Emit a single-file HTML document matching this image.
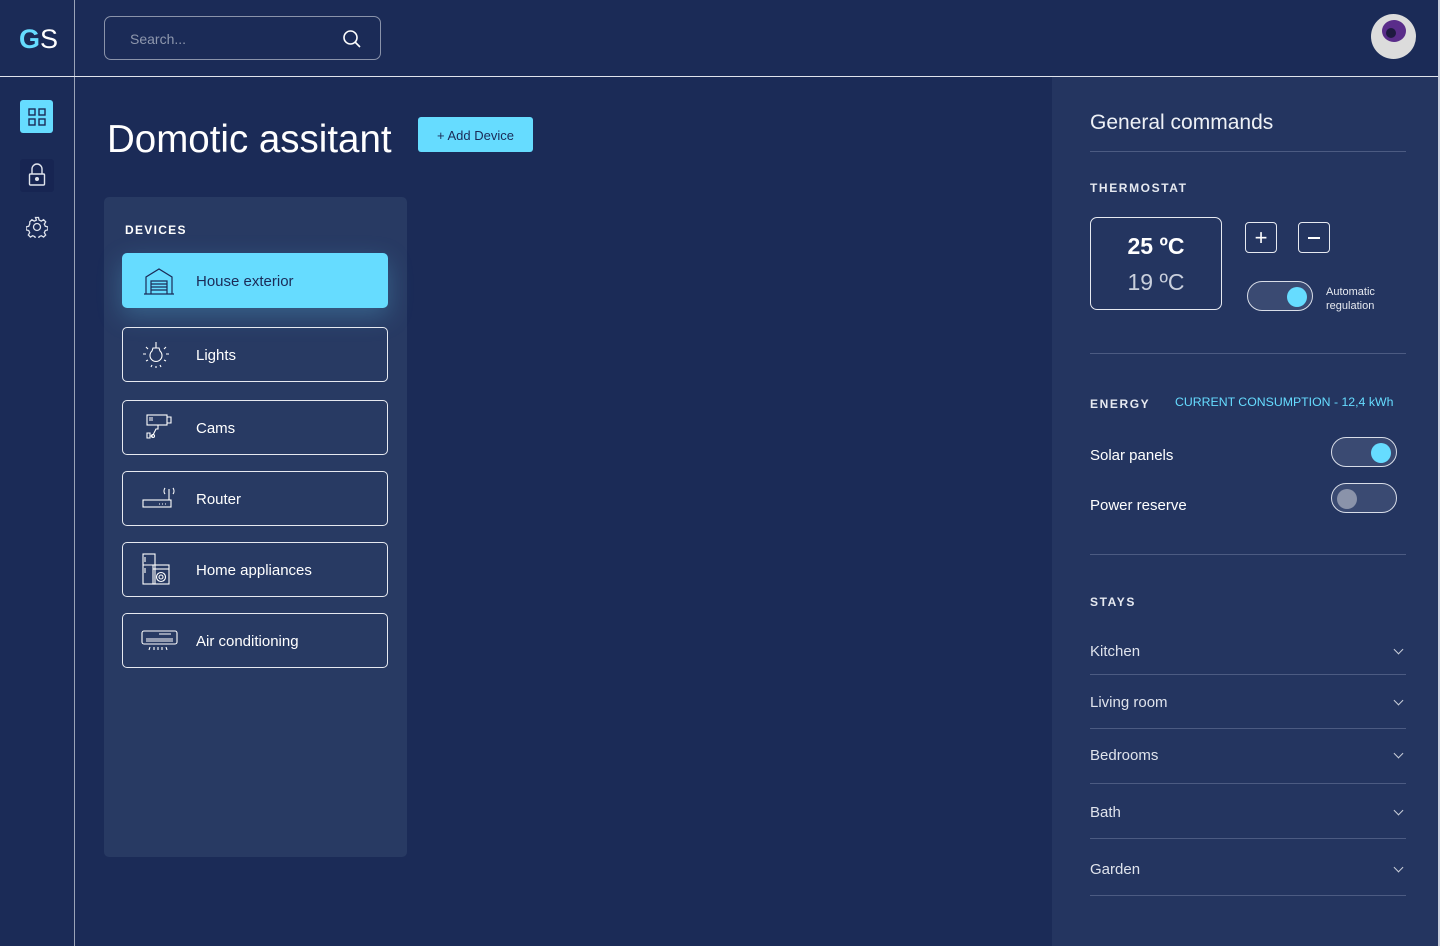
<!DOCTYPE html>
<html><head><meta charset="utf-8"><style>
*{box-sizing:border-box;margin:0;padding:0}
body{width:1440px;height:946px;background:#1b2b57;font-family:"Liberation Sans",sans-serif;color:#fff;position:relative;overflow:hidden}
.a{position:absolute}
.dev{position:absolute;left:122px;width:266px;height:55px;border:1px solid #e6e9f0;border-radius:5px;font-size:15px;display:flex;align-items:center}
.dev span{position:absolute;left:73px;top:19px}
.dev svg{position:absolute;left:18px}
.tg{position:absolute;width:66px;height:30px;border:1.5px solid #d8dde8;border-radius:15px;background:#3a4a72}
.tg i{position:absolute;top:5px;width:20px;height:20px;border-radius:50%}
.stay{position:absolute;left:1090px;width:316px;font-size:15px;color:#dfe3ec}
.stay:after{content:"";position:absolute;right:4px;top:3px;width:6px;height:6px;border-right:1.5px solid #c8cdd8;border-bottom:1.5px solid #c8cdd8;transform:rotate(45deg)}
.hr{position:absolute;left:1090px;width:316px;height:1px;background:#4c5b82}
</style></head><body>
<div class="a" style="left:74px;top:0;width:1px;height:946px;background:#9aa3b8"></div>
<div class="a" style="left:0;top:76px;width:1440px;height:1px;background:#e0e4ec"></div>
<div class="a" style="left:1052px;top:77px;width:386px;height:869px;background:#243560"></div>
<div class="a" style="left:1438px;top:0;width:2px;height:946px;background:#c9cfdc"></div>
<div class="a" style="left:19px;top:24px;font-size:27px;font-weight:bold"><span style="color:#66dcff">G</span><span style="font-weight:normal">S</span></div>
<div class="a" style="left:104px;top:16px;width:277px;height:44px;border:1px solid #8a93aa;border-radius:7px"></div>
<div class="a" style="left:130px;top:31px;font-size:14px;color:#8e97ad">Search...</div>
<svg class="a" style="left:342px;top:29px" width="20" height="20"><circle cx="8.5" cy="8.5" r="6.5" fill="none" stroke="#fff" stroke-width="1.6"/><path d="M13 13l5 5" stroke="#fff" stroke-width="1.6"/></svg>
<div class="a" style="left:1371px;top:14px;width:45px;height:45px;border-radius:50%;background:#dcdcdc"></div>
<div class="a" style="left:1382px;top:20px;width:24px;height:22px;border-radius:50%;background:#5a2d8a"></div>
<div class="a" style="left:1386px;top:28px;width:10px;height:10px;border-radius:50%;background:#1e1a40"></div>
<div class="a" style="left:20px;top:100px;width:33px;height:33px;border-radius:3px;background:#66dcff"></div>
<svg class="a" style="left:28px;top:108px" width="18" height="18" fill="none" stroke="#1b2b57" stroke-width="1.4"><rect x="1" y="1" width="6" height="6"/><rect x="11" y="1" width="6" height="6"/><rect x="1" y="11" width="6" height="6"/><rect x="11" y="11" width="6" height="6"/></svg>
<div class="a" style="left:20px;top:159px;width:34px;height:33px;border-radius:3px;background:#172552"></div>
<svg class="a" style="left:28px;top:163px" width="18" height="24" fill="none" stroke="#dfe3ec" stroke-width="1.4"><path d="M4 11V6a5 5 0 0 1 10 0v5"/><rect x="1.5" y="11" width="15" height="11" rx="1"/><circle cx="9" cy="16" r="1.3" fill="#dfe3ec"/></svg>
<svg class="a" style="left:26px;top:216px" width="22" height="22" fill="none" stroke="#dfe3ec" stroke-width="1.3"><circle cx="11" cy="11" r="3.5"/><path d="M9.5 1.5h3l.6 2.6 2.2 1 2.3-1.4 2.1 2.1-1.4 2.3 1 2.2 2.6.6v3l-2.6.6-1 2.2 1.4 2.3-2.1 2.1-2.3-1.4-2.2 1-.6 2.6h-3l-.6-2.6-2.2-1-2.3 1.4-2.1-2.1 1.4-2.3-1-2.2-2.6-.6v-3l2.6-.6 1-2.2L3.8 5.8l2.1-2.1 2.3 1.4 2.2-1z"/></svg>
<div class="a" style="left:107px;top:118px;font-size:38.5px">Domotic assitant</div>
<div class="a" style="left:418px;top:117px;width:115px;height:35px;border-radius:3px;background:#66dcff;color:#1b2b57;font-size:13px;text-align:center;line-height:37px">+ Add Device</div>
<div class="a" style="left:104px;top:197px;width:303px;height:660px;border-radius:5px;background:#283a63"></div>
<div class="a" style="left:125px;top:223px;font-size:12px;font-weight:bold;letter-spacing:1.3px">DEVICES</div>
<div class="dev" style="top:253px;background:#66dcff;border-color:#66dcff;color:#1b2b57;box-shadow:0 8px 25px rgba(102,220,255,.25)"><svg width="32" height="28" fill="none" stroke="#1b2b57" stroke-width="1.2" style="left:20px"><path d="M1 27h30M3 27V10L16 2l13 8v17M8 27V14h16v13M8 17h16M8 20h16M8 23h16"/></svg><span>House exterior</span></div>
<div class="dev" style="top:327px"><svg width="30" height="30" fill="none" stroke="#fff" stroke-width="1.1"><path d="M15 2v6M12 8h6l1 3a6 6 0 1 1-8 0z M2 14h3M25 14h3M5 7l2 2M25 7l-2 2M5 21l2-1M25 21l-2-1M10 27l1-2M20 27l-1-2M15 28v-2"/></svg><span>Lights</span></div>
<div class="dev" style="top:400px"><svg width="32" height="30" fill="none" stroke="#fff" stroke-width="1.1"><rect x="6" y="2" width="20" height="10"/><path d="M26 4h4v6h-4M17 12v4h-2l-3 6M6 20h3v5H6zM9 23h3"/><circle cx="12" cy="23" r="1.5"/><path d="M8 5h4M8 7h4"/></svg><span>Cams</span></div>
<div class="dev" style="top:471px"><svg width="34" height="30" fill="none" stroke="#fff" stroke-width="1.1"><rect x="2" y="16" width="28" height="7"/><path d="M28 16V5M24 4a5 5 0 0 0 0 6M32 4a5 5 0 0 1 0 6M18 20h1M21 20h1M24 20h1"/></svg><span>Router</span></div>
<div class="dev" style="top:542px"><svg width="32" height="34" fill="none" stroke="#fff" stroke-width="1.1" style="top:10px"><rect x="2" y="1" width="12" height="30"/><path d="M2 12h12M4 4v5M4 15v5"/><rect x="12" y="12" width="16" height="19"/><path d="M12 16h16"/><circle cx="20" cy="24" r="4.5"/><circle cx="20" cy="24" r="2"/></svg><span>Home appliances</span></div>
<div class="dev" style="top:613px"><svg width="38" height="26" fill="none" stroke="#fff" stroke-width="1.1"><rect x="1" y="3" width="35" height="13" rx="2"/><path d="M5 13h27M5 11h27M18 6h12M9 19l-1 3M13 19v3M17 19v3M21 19v3M25 19l1 3"/></svg><span>Air conditioning</span></div>
<div class="a" style="left:1090px;top:111px;font-size:21px;color:#eef1f6">General commands</div>
<div class="hr" style="top:151px"></div>
<div class="a" style="left:1090px;top:181px;font-size:12px;font-weight:bold;letter-spacing:1.6px;color:#e6e9f0">THERMOSTAT</div>
<div class="a" style="left:1090px;top:217px;width:132px;height:93px;border:1.5px solid #e6e9f0;border-radius:7px;text-align:center">
<div style="margin-top:15px;font-size:23px;font-weight:bold">25 ºC</div><div style="margin-top:9px;font-size:23px;color:#c9cfdc">19 ºC</div></div>
<div class="a" style="left:1245px;top:222px;width:32px;height:31px;border:1.5px solid #e6e9f0;border-radius:4px;text-align:center;font-size:22px;line-height:30px">+</div>
<div class="a" style="left:1298px;top:222px;width:32px;height:31px;border:1.5px solid #e6e9f0;border-radius:4px"><div style="position:absolute;left:9px;top:14px;width:12px;height:1.5px;background:#fff"></div></div>
<div class="tg" style="left:1247px;top:281px"><i style="right:5px;background:#66dcff"></i></div>
<div class="a" style="left:1326px;top:285px;font-size:11px;line-height:14px;color:#e6e9f0">Automatic<br>regulation</div>
<div class="hr" style="top:353px"></div>
<div class="a" style="left:1090px;top:397px;font-size:12px;font-weight:bold;letter-spacing:1.6px;color:#e6e9f0">ENERGY</div>
<div class="a" style="left:1175px;top:395px;font-size:12.3px;color:#66dcff">CURRENT CONSUMPTION - 12,4 kWh</div>
<div class="a" style="left:1090px;top:447px;font-size:15px">Solar panels</div>
<div class="tg" style="left:1331px;top:437px"><i style="right:5px;background:#66dcff"></i></div>
<div class="a" style="left:1090px;top:497px;font-size:15px">Power reserve</div>
<div class="tg" style="left:1331px;top:483px"><i style="left:5px;background:#8a93aa"></i></div>
<div class="hr" style="top:554px"></div>
<div class="a" style="left:1090px;top:595px;font-size:12px;font-weight:bold;letter-spacing:1.6px;color:#e6e9f0">STAYS</div>
<div class="stay" style="top:643px">Kitchen</div><div class="hr" style="top:674px"></div>
<div class="stay" style="top:694px">Living room</div><div class="hr" style="top:728px"></div>
<div class="stay" style="top:747px">Bedrooms</div><div class="hr" style="top:783px"></div>
<div class="stay" style="top:804px">Bath</div><div class="hr" style="top:838px"></div>
<div class="stay" style="top:861px">Garden</div><div class="hr" style="top:895px"></div>
</body></html>
